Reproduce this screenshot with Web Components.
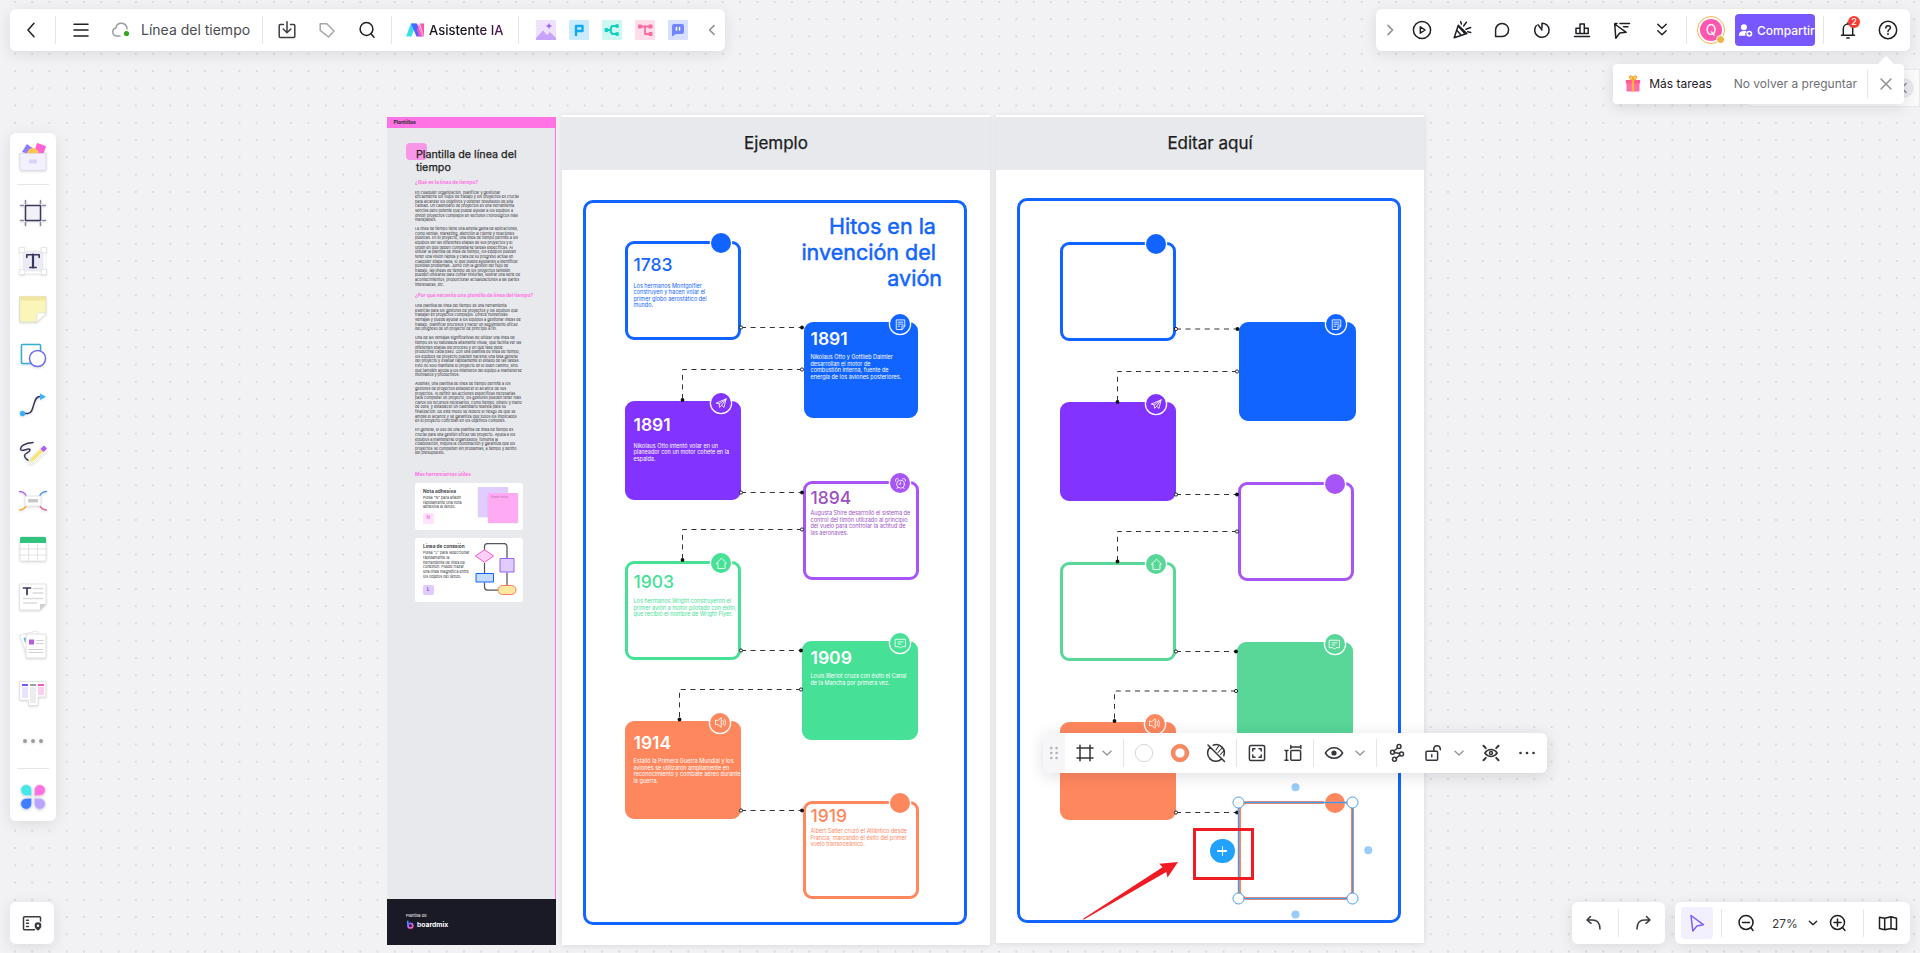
<!DOCTYPE html>
<html lang="es">
<head>
<meta charset="utf-8">
<title>Línea del tiempo</title>
<style>
  html, body { margin: 0; height: 100%; }
  body { font-family: Inter, "Noto Sans", sans-serif; color: #1f2024; overflow: hidden; }
</style>
</head>
<body>
<wb-app></wb-app>

<script>
const icons = {
  back: `<path d="M15 5.2 9 12l6 6.8"/>`,
  left: `<g stroke="#8f9095"><path d="m14 7.6-4.400 4.400 4.400 4.400"/></g>`,
  right: `<g stroke="#8f9095"><path d="m10 7.400 4.600 4.600-4.600 4.600"/></g>`,
  menu: `<path d="M5 6.200h14M5 12h14M5 18h14"/>`,
  cloud: `<g stroke="#9c9da1"><path d="M11 18H7.500a4 4 0 0 1-.6-7.900 5.600 5.600 0 0 1 10.600-1.700c.4.900.5 1.800.5 2.600"/></g><circle cx="17.500" cy="15.500" r="2.600" fill="#3aa51a" stroke="none"/>`,
  download: `<g stroke="#3c3d41"><path d="M8.500 6.500H5.200a1 1 0 0 0-1 1v11a1 1 0 0 0 1 1h13.600a1 1 0 0 0 1-1v-11a1 1 0 0 0-1-1h-3.300M12 3.800v10.700M8.200 11l3.800 3.800 3.800-3.800"/></g>`,
  tag: `<g stroke="#a5a6aa"><path d="M5.200 5.800h6.600L19 13l-5.500 6L5.200 12.400z"/></g>`,
  search: `<circle cx="11.500" cy="11" r="6.400"/><path d="m15.800 15.600 3.200 3.600"/>`,
  play: `<circle cx="12" cy="12" r="8.600"/><path d="M10.300 8.800v6.400l4.800-3.200z"/>`,
  party: `<path d="m8.300 7.300 8.600 8.200-12.700 4.200zM6.800 12.300l4.200 4.600M9 9l5.500 6.200M11.400 6l-.7-2.200M13.600 8l2.800-3.800M16 11.200l4.700-1.700M17.700 13.700l3 .8"/>`,
  chat: `<path d="M5.600 18.400V12A6.500 6.500 0 1 1 12.200 18.400z"/>`,
  timer: `<path d="M16.700 6.800A7.200 7.200 0 1 1 6.300 7.600M12 12 8 6.800M12 5.200v4.500M12 5.200c1.700 0 3.300.5 4.700 1.600"/>`,
  podium: `<path d="M4.500 18.600h15M6 15.500v-5.300h4v5.300M10 15.500V6h4.300v9.500M14.300 10.200h3.900v5.300H6"/>`,
  pointer: `<path d="m4.700 6 11.500 8.300-6.500.7-3.900 5.200zM10 5.500h9.500M13.500 8.800h4.500M5 5.500h2"/>`,
  more2: `<path d="m7.800 6.200 4.200 4 4.200-4M7.800 12.700l4.200 4 4.200-4"/>`,
  bell: `<path d="M5.500 17.200h13M7.300 17v-6.200a4.700 4.700 0 0 1 9.400 0V17M10.800 20h2.400M12 6V4.600"/>`,
  help: `<circle cx="12" cy="12" r="8.700"/><path d="M9.800 9.900c0-3 4.600-2.900 4.600-.2 0 1.800-2.400 1.800-2.400 3.700M12 15.600v1"/>`,
  person: `<g fill="#fff" stroke="none"><circle cx="10" cy="8" r="3.800"/><path d="M3.500 18.500c0-4 2.600-5.800 6.500-5.800 1.300 0 2.400.2 3.300.6a5 5 0 0 0-1.300 5.200z"/><path fill-rule="evenodd" d="M16.800 12.200a3.800 3.800 0 1 0 0 7.600 3.800 3.800 0 0 0 0-7.600zm-.7 1.800h1.400v1.300h1.300v1.400h-1.300V18h-1.400v-1.300h-1.300v-1.400h1.300z"/></g>`,
  close: `<g stroke="#8f9095"><path d="m7 7 10 10M17 7 7 17"/></g>`,
  gift: `<g stroke="none"><path d="M5.500 11h13v8.500h-13z" fill="#ff6cab"/><path d="M4.800 8h14.400v3.500H4.800z" fill="#ff5a93"/><path d="M10.800 8h2.400v11.500h-2.400z" fill="#ffb636"/></g><path d="M12 7.600C8.500 8 7.500 4.200 9.700 4.200S12 7.600 12 7.600s.1-3.400 2.300-3.400S15.500 8 12 7.600z" stroke="#f8a928"/>`,
  undo: `<path d="M8.500 5.500 5 9l4 3.300M5.300 8.900h5c5 0 7.700 3.500 7.700 9.100"/>`,
  redo: `<path d="m15.500 5.500 3.500 3.500-4 3.300M18.700 8.900h-5C8.700 8.900 6 12.400 6 18"/>`,
  arrow: `<g stroke="#7a5cff"><path d="m6 4.500 12.300 9.200-6.500 1.400-4 4.900z"/></g>`,
  minus: `<circle cx="12" cy="11.400" r="7"/><path d="M8.500 11.400h7M16.800 16.500l2.200 3"/>`,
  plus: `<circle cx="11.500" cy="11.400" r="7"/><path d="M8 11.400h7M11.500 8v7M16.500 16.500l2.500 3"/>`,
  map: `<path d="M3.500 6.200 8.700 7.300l6.300-1.500 5.500 1.500v11.200l-5.500-1-6.300 1.300-5.200-1.300zM8.700 7.300v11.500M15 5.800v11.700"/>`,
  navigator: `<g stroke="#3a3b40"><path d="M20.500 10V6.800a1 1 0 0 0-1-1h-15a1 1 0 0 0-1 1v11a1 1 0 0 0 1 1h10M6.500 9.200h2M6.500 12.300h2M6.500 15.400h2"/></g><path fill="#3a3b40" stroke="none" fill-rule="evenodd" d="M18 11.300a3.400 3.400 0 0 0-3.400 3.400c0 2 1.700 3.600 3.400 5 1.700-1.400 3.400-3 3.400-5a3.400 3.400 0 0 0-3.400-3.400zm0 2.300a1.200 1.200 0 1 1 0 2.400 1.200 1.200 0 0 1 0-2.400z"/>`,
  grip: `<g fill="#b0b1b6" stroke="none"><circle cx="9.300" cy="7" r="1.300"/><circle cx="14.600" cy="7" r="1.300"/><circle cx="9.300" cy="12" r="1.300"/><circle cx="14.600" cy="12" r="1.300"/><circle cx="9.300" cy="17" r="1.300"/><circle cx="14.600" cy="17" r="1.300"/></g>`,
  frame: `<path d="M7 4.300v15.400M17 4.300v15.400M4 7h16M4 17h16"/>`,
  down: `<g stroke="#97989d"><path d="m8 10.200 4 3.800 4-3.800"/></g>`,
  downDark: `<path d="m8 10 4 3.800 4-3.800"/>`,
  empty: `<circle cx="12" cy="12" r="8.700" fill="#fff" stroke="#d6d7da" stroke-width="1"/>`,
  ring: `<circle cx="12" cy="12" r="6.800" stroke="#ff875e" stroke-width="4"/><circle cx="12" cy="12" r="8.800" stroke="#d9734f" stroke-width=".6"/><circle cx="12" cy="12" r="4.800" stroke="#c8b4ae" stroke-width=".6"/>`,
  hatch: `<path d="M6 6.300a8.200 8.200 0 0 0 11.600 11.600M9.300 4.200a8.200 8.200 0 0 1 10.500 10.600M4 4l16.500 16.500"/><path stroke-width="1.100" d="m12 9 3-4.500M14 11.500l4.500-5M16.500 13.500l3.500-3.800"/>`,
  fit: `<rect x="4.400" y="4.400" width="15.200" height="15.200" rx="1.500"/><path d="M7.800 10V7.800H10M14 7.800h2.200V10M16.200 14v2.200H14M10 16.200H7.800V14"/>`,
  dims: `<rect x="9.800" y="9.500" width="9.800" height="9.800" rx="1"/><path d="M9.800 6h10M9.800 4.500v3M19.800 4.500v3M5.500 9.500v9.800M4 9.500h3M4 19.300h3"/>`,
  eye: `<path d="M3.400 12c4.200-7 13-7 17.200 0-4.200 7-13 7-17.200 0z"/><circle cx="12" cy="12" r="2.600" fill="currentColor" stroke="none"/>`,
  share: `<circle cx="14" cy="5.600" r="2"/><circle cx="7.500" cy="11.200" r="2"/><circle cx="16.500" cy="13" r="2"/><circle cx="9.500" cy="18.300" r="2"/><path d="m12.600 7-3.700 3M9.500 11.600l5 1M15 14.200l-4 3"/>`,
  lock: `<rect x="5" y="10.200" width="11.600" height="9" rx="1"/><path d="M10.800 13.700v2M12.800 10V7.600a3.300 3.300 0 0 1 6.500 0v1.200"/>`,
  focus: `<path d="M5.800 12c3.300-4.600 9.100-4.600 12.400 0-3.300 4.600-9.100 4.600-12.400 0z"/><path stroke-width="2" d="m4.500 4.800 2.300 2.300M19.500 4.800l-2.300 2.300M4.500 19.200l2.300-2.300M19.500 19.200l-2.300-2.300"/><circle cx="12" cy="12" r="1.500"/>`,
  dots: `<g fill="currentColor" stroke="none"><circle cx="5.500" cy="12" r="1.300"/><circle cx="12" cy="12" r="1.300"/><circle cx="18.500" cy="12" r="1.300"/></g>`,
  note: `<path d="M18 14V5.500H6v13.500h8zM18 14h-4v5M8.500 8.700h7M8.500 11.500h7M8.500 14.500h2.500"/>`,
  plane: `<path d="M5 11.200 18.500 5.500 15.500 17.500 12.200 14.500 9.300 17.500 8.700 12.800zM8.700 12.800 18.500 5.500M18.500 5.500l-6.300 9"/>`,
  clock: `<circle cx="12" cy="13" r="5.500"/><path d="M12 10.300V13h-2M5.200 8.800a2.600 2.600 0 0 1 4.200-3M18.800 8.800a2.600 2.600 0 0 0-4.200-3M8.300 17.500l-1.400 1.800M15.700 17.500l1.400 1.800"/>`,
  home: `<path d="m5 11.500 7-7 7 7h-2V19H7v-7.500z"/>`,
  message: `<path d="M5 6h14v10.500h-5L12 18.700l-2-2.200H5zM8.500 9.700h7M8.500 12.700h4"/>`,
  sound: `<path d="M5 9v6h3.500l4.500 3.800V5.200L8.500 9zM15.500 9c1 2 1 4 0 6M17.500 7c2 3 2 7 0 10"/>`,
  chooser: `<g stroke="none"><path d="m9 4 7 3-4 9H8z" fill="#a27bff" opacity=".9"/><path d="M5 11 10 3l5 4-2 6z" fill="#8f7dff"/><path d="m20 2 9 3-3 9-9-2z" fill="#ff62d5"/><path d="M10 13a6 6 0 0 1 12 0z" fill="#ffc54a"/></g><path d="M3 12.500h26v15.300a1.600 1.600 0 0 1-1.600 1.600H4.600A1.600 1.600 0 0 1 3 27.800z" fill="#f3f0ff" stroke="#dcd9ea" stroke-width=".8"/><rect x="12" y="18.500" width="8" height="4" rx="1" fill="#dad3f8" stroke="none"/>`,
  artboard: `<rect x="8.500" y="8.500" width="15" height="15" fill="#f1f1f6" stroke="#3b3a5a"/><path stroke="#8a8aa8" d="M8.500 3.500v3M23.500 3.500v3M8.500 25.500v3M23.500 25.500v3M3.500 8.500h3M3.500 23.500h3M25.500 8.500h3M25.500 23.500h3"/>`,
  text: `<rect x="4.500" y="4.500" width="23" height="23" fill="#ebebf3" stroke="#fff" stroke-width="2"/><g fill="#fff" stroke="#dfe0e5" stroke-width=".8"><rect x="2.500" y="2.500" width="5" height="5"/><rect x="24.500" y="2.500" width="5" height="5"/><rect x="2.500" y="24.500" width="5" height="5"/><rect x="24.500" y="24.500" width="5" height="5"/></g><path stroke="#38365a" stroke-width="2.200" d="M16 9.500v13"/><path stroke="#38365a" stroke-width="1.600" d="M9.800 12.500V9.800h12.400v2.700M12.800 22.500h6.400"/>`,
  sticky: `<path d="M3 3.500h26V20l-9 9H3z" fill="#faf5b8" stroke="#d9d8cf" stroke-width=".7"/><path d="M3 3.500h26v4H3z" fill="#f1e69f" stroke="none"/><path d="M20 29v-8a1 1 0 0 1 1-1h8z" fill="#fff" stroke="#dddcd6" stroke-width=".6"/>`,
  shapes: `<rect x="4.500" y="3.500" width="19" height="19" rx="1" fill="#fff" stroke="#2fb1d6"/><circle cx="20.500" cy="17.500" r="8" fill="#fff" stroke="#6c6cf5"/>`,
  curve: `<path stroke="#38365a" d="M6 24.500h5c7 0 4-17 12-17h1"/><circle cx="5.500" cy="24.500" r="2.700" fill="#3ab3ff" stroke="none"/><path d="m23 4.500 6 3.200-6 3.200z" fill="#3ab3ff" stroke="none"/>`,
  pen: `<path stroke="#38365a" d="M16 5.500C9 6 2 9 4 13c1 2 9-3 9 0s-6 3-5.500 6c.4 2.500 4 5 5.500 5"/><path d="m13 21 12-12 4 4-12 12-5 1.500z" fill="#f7e77b" stroke="#fff" stroke-width="2"/><path d="m12.300 26 1.200-4.600L25 9l4 4-12 12z" stroke="#d8d6cc" stroke-width=".6"/><path d="m24.500 12 2.500-2.500 2 2-2.500 2.500z" fill="#b45cff" stroke="#b45cff"/>`,
  mind: `<path stroke="#b569e8" d="M2.500 6.500c5 0 6 3 7.500 5.500"/><path stroke="#4a9cf0" d="M29.500 6.500c-5 0-6 3-7.500 5.500"/><path stroke="#f5ab3c" d="M2.500 25c5 0 6-3 7.500-5.500"/><path stroke="#f0668e" d="M29.500 25c-5 0-6-3-7.500-5.500"/><rect x="8" y="11" width="16" height="10" rx="1.500" fill="#fff" stroke="#e3e3e6" stroke-width=".8"/><path d="M11 14h10v3.500H11z" fill="#c9cacd" stroke="none"/>`,
  grid: `<rect x="3" y="4" width="26" height="24" rx="1.500" fill="#fff" stroke="#dcdde0" stroke-width=".8"/><path d="M3 5.500A1.500 1.500 0 0 1 4.500 4h23A1.500 1.500 0 0 1 29 5.500V10H3z" fill="#2fc37c" stroke="none"/><path d="M3 16h26M3 22h26M11.600 10v18M20.400 10v18" stroke="#e2e2e6" stroke-width="1"/>`,
  doc: `<path d="M3 3h26v20l-6 6H3z" fill="#fff" stroke="#dcdde0" stroke-width=".8"/><path d="M23 29v-6h6z" fill="#cfcfd3" stroke="none"/><path d="M6.500 7h7M10 7v6.500" stroke="#38365a" stroke-width="1.700"/><path d="M16 7.500h10M16 12h10M6.500 17.500H26M6.500 22h13" stroke="#dcdce0" stroke-width="1.300"/>`,
  cards: `<path d="m3 6 17-4 5 19-15 5z" fill="#fff" stroke="#e3e4e7" stroke-width=".8"/><path d="m6.500 9 4-1v5.500H8z" fill="#58aef5" stroke="none"/><rect x="9" y="5" width="20" height="24" rx="1" fill="#fff" stroke="#d9dadd" stroke-width=".8"/><path d="M12 10.500h5v5h-5z" fill="#b65be3" stroke="none"/><path d="M19.500 11.500H26M19.500 14.500H26M12 20.500h14M12 23.500h14" stroke="#cfd0d4" stroke-width="1.200"/>`,
  kanban: `<path d="M3 4.500h26V20h-8v8.500h-9.500V23H3z" fill="#fff" stroke="#dcdde0" stroke-width=".8"/><path d="M5 10h6v11H5z" fill="#e9e3ff" stroke="none"/><path d="M13 10h6v16h-6z" fill="#ededf0" stroke="none"/><path d="M21 10h6v8h-6z" fill="#ffcdf1" stroke="none"/><g stroke="none"><path d="M5 7h6v2H5z" fill="#7357ff"/><path d="M13 7h6v2h-6z" fill="#9d9ea3"/><path d="M21 7h6v2h-6z" fill="#ff4fc9"/></g>`,
  ellipsis: `<g fill="#9b9ca1" stroke="none"><circle cx="8" cy="16" r="2"/><circle cx="16" cy="16" r="2"/><circle cx="24" cy="16" r="2"/></g>`,
  clover: `<g stroke="#eceaf2" stroke-width=".8"><path d="M14.800 14.800V9a5.600 5.600 0 1 0-6 5.800z" fill="#45e8e8"/><path d="M17.200 14.800V9a5.600 5.600 0 1 1 6 5.800z" fill="#ff70e0"/><path d="M14.800 17.200V23a5.600 5.600 0 1 1-6-5.800z" fill="#3d7dff"/><path d="M17.200 17.200V23a5.600 5.600 0 1 0 6-5.800z" fill="#b9a4ff"/></g>`,
  ai: `<defs><linearGradient id="a" x1="0" y1="1" x2="0" y2="0"><stop stop-color="#31e6e0"/><stop offset="1" stop-color="#3fd0f3"/></linearGradient><linearGradient id="b"><stop stop-color="#2c7cff"/><stop offset="1" stop-color="#8b3fff"/></linearGradient></defs><g stroke="none"><path d="M3 18.500 8 5.500h5L8.500 18.500z" fill="url(#a)"/><path d="M8 5.500h6l5 13h-5.500z" fill="url(#b)"/><path d="M17 5.500h4v13z" fill="#ff4fb0"/><path d="m16 5.500 5 13h-5l-2-7z" fill="#ff62b8" opacity=".8"/></g>`,
  appImage: `<g stroke="none"><rect x="2" y="2" width="20" height="20" rx="1" fill="#efe2fd"/><path d="m2 20 7-7.500 4 4.500 3-3 6 6v2H2z" fill="#c9a2fb"/><path d="M15 4.500c.5 2.500 1 3 3.500 3.500-2.500.500-3 1-3.500 3.500-.5-2.500-1-3-3.500-3.500 2.500-.5 3-1 3.500-3.500z" fill="#a35cf8"/></g>`,
  appDiagram: `<rect x="2" y="2" width="20" height="20" rx="1" fill="#c8ecfe" stroke="none"/><path d="M9 17V8h6.500v5H9" stroke="#12a9f2" stroke-width="2.400"/>`,
  appMind: `<rect x="2" y="2" width="20" height="20" rx="1" fill="#cdf7f1" stroke="none"/><path d="M17 8h-4c-3 0-3 8 0 8h4M6 12h5" stroke="#11d0c0" stroke-width="2"/><g fill="#11d0c0" stroke="none"><circle cx="17" cy="8" r="2"/><circle cx="17" cy="16" r="2"/><circle cx="6.500" cy="12" r="2.200"/></g>`,
  appFlow: `<rect x="2" y="2" width="20" height="20" rx="1" fill="#ffdcea" stroke="none"/><path d="M7 8.500h10M12 8.500V16h5" stroke="#f86aa1" stroke-width="1.800"/><g fill="#f86aa1" stroke="none"><rect x="5" y="6.500" width="4" height="4" rx="1"/><rect x="15.500" y="6.500" width="4" height="4" rx="1"/><rect x="15.500" y="14" width="4" height="4" rx="1"/></g>`,
  appChat: `<g stroke="none"><rect x="2" y="2" width="20" height="20" rx="1" fill="#d7e0ff"/><path d="M8 6h8a2 2 0 0 1 2 2v6a2 2 0 0 1-2 2h-6l-4 2.500V8a2 2 0 0 1 2-2z" fill="#7286fb"/></g><path d="M10.500 9.500V12M13.500 9.500V12" stroke="#fff"/>`,
  boardmix: `<defs><linearGradient id="g" x1="0" x2="1" y2="1"><stop stop-color="#4d6dff"/><stop offset=".5" stop-color="#d95cff"/><stop offset="1" stop-color="#ff5d9a"/></linearGradient></defs><path d="M5 2v13" stroke="#4e8dff" stroke-width="4.500"/><circle cx="12.500" cy="14.500" r="6.500" stroke="url(#g)" stroke-width="5"/>`
};
const large = new Set(['chooser','artboard','text','sticky','shapes','curve','pen','mind','grid','doc','cards','kanban','ellipsis','clover']);

/* Registers an element whose shadow root is cloned from the given markup. */
function define(name, markup, setup) {
  const template = document.createElement('template');
  customElements.define(name, class extends HTMLElement {
    constructor() {
      super();
      this.attachShadow({ mode: 'open' });
    }
    connectedCallback() {
      if (this.shadowRoot.childNodes.length) return;
      template.innerHTML = markup;
      this.shadowRoot.append(template.content.cloneNode(true));
      if (setup) setup(this, this.shadowRoot);
    }
  });
}

define('wb-icon', `
<style>
  :host { display: block; flex: none; width: 24px; height: 24px; }
  :host([large]) { width: 32px; height: 32px; }
  svg { display: block; width: 100%; height: 100%; fill: none; stroke: currentColor; stroke-width: var(--stroke, 1.5px); stroke-linecap: round; stroke-linejoin: round; overflow: visible; }
</style><svg aria-hidden="true"></svg>`, (host, root) => {
  const name = host.getAttribute('name');
  const svg = root.querySelector('svg');
  const big = large.has(name);
  host.toggleAttribute('large', big);
  svg.setAttribute('viewBox', big ? '0 0 32 32' : '0 0 24 24');
  svg.innerHTML = icons[name] || '';
});

define('icon-button', `
<style>
  :host { display: block; flex: none; width: 32px; height: 32px; }
  button { all: unset; box-sizing: border-box; width: 100%; height: 100%; display: flex; align-items: center; justify-content: center; border-radius: 4px; cursor: pointer; color: inherit; }
  button:hover, :host([active]) button { background: #f2efff; }
</style><button type="button"><wb-icon></wb-icon></button>`, (host, root) => {
  root.querySelector('button').setAttribute('aria-label', host.getAttribute('label'));
  const icon = document.createElement('wb-icon');
  icon.setAttribute('name', host.getAttribute('icon'));
  root.querySelector('wb-icon').replaceWith(icon);
});

define('bar-rule', `<style>:host { display: block; flex: none; width: 1px; height: 28px; background: #e6e6e9; } :host([flat]) { width: 32px; height: 1px; }</style>`);

define('tool-bar', `
<style>
  :host { display: flex; align-items: center; gap: 8px; height: 42px; padding: 0 6px; box-sizing: border-box; background: #fff; border-radius: 6px; box-shadow: 0 3px 14px rgba(25, 25, 50, .1); pointer-events: auto; }
</style><slot></slot>`);

define('file-bar', `
<style>
  :host { display: block; }
  tool-bar { padding: 0 2px 0 5px; }
  button { all: unset; display: flex; align-items: center; cursor: pointer; white-space: nowrap; }
  .name { padding: 0 4px; gap: 8px; font-size: 14px; line-height: 20px; color: #4b4c50; }
  .menu { margin-left: 1px; }
  .ai { padding: 0 7px 0 3px; gap: 2px; font-size: 13px; line-height: 20px; font-weight: 500; color: #1f1024; }
  .ai span { background: linear-gradient(90deg, #17131c 60%, #54175f); background-clip: text; color: transparent; }
  .apps { display: flex; gap: 9px; padding: 0 3px 0 7px; }
  .apps icon-button { width: 24px; height: 24px; }
  .fold { width: 22px; }
</style>
<tool-bar>
  <icon-button icon="back" label="Volver"></icon-button>
  <bar-rule></bar-rule>
  <icon-button class="menu" icon="menu" label="Menú"></icon-button>
  <button class="name" type="button"><wb-icon name="cloud"></wb-icon><span>Línea del tiempo</span></button>
  <bar-rule></bar-rule>
  <icon-button icon="download" label="Exportar"></icon-button>
  <icon-button icon="tag" label="Etiquetas"></icon-button>
  <icon-button icon="search" label="Buscar"></icon-button>
  <bar-rule></bar-rule>
  <button class="ai" type="button"><wb-icon name="ai"></wb-icon><span>Asistente IA</span></button>
  <bar-rule></bar-rule>
  <div class="apps">
    <icon-button icon="appImage" label="Imagen"></icon-button>
    <icon-button icon="appDiagram" label="Presentación"></icon-button>
    <icon-button icon="appMind" label="Mapa mental"></icon-button>
    <icon-button icon="appFlow" label="Diagrama"></icon-button>
    <icon-button icon="appChat" label="Chat"></icon-button>
  </div>
  <icon-button class="fold" icon="left" label="Plegar"></icon-button>
</tool-bar>`);

define('session-bar', `
<style>
  :host { display: block; }
  .fold { width: 16px; }
  .avatar { position: relative; width: 28px; height: 28px; margin: 0 2px; box-sizing: border-box; border: 1px solid #f6b64a; border-radius: 50%; padding: 2px; }
  .avatar b { display: block; border-radius: 50%; background: #ff56ae; color: #fff; font-size: 14px; line-height: 22px; font-weight: 400; text-align: center; }
  .crown { position: absolute; right: -1px; bottom: -1px; width: 9px; height: 9px; border-radius: 50%; background: #f2b24a; border: 1px solid #fff; box-sizing: border-box; }
  .share { all: unset; display: flex; align-items: center; gap: 2px; box-sizing: border-box; width: 80px; height: 32px; padding-left: 1px; border-radius: 4px; background: #7857ff; color: #fff; font-size: 12px; font-weight: 500; cursor: pointer; white-space: nowrap; }
  .share wb-icon { width: 19px; height: 19px; }
  .alert { position: relative; }
  .alert b { position: absolute; right: 4px; top: 2px; width: 12px; height: 12px; border-radius: 6px; background: #fa3a30; color: #fff; font-size: 9px; line-height: 12px; font-weight: 500; text-align: center; }
</style>
<tool-bar>
  <icon-button class="fold" icon="right" label="Desplegar"></icon-button>
  <icon-button icon="play" label="Presentar"></icon-button>
  <icon-button icon="party" label="Celebrar"></icon-button>
  <icon-button icon="chat" label="Comentarios"></icon-button>
  <icon-button icon="timer" label="Temporizador"></icon-button>
  <icon-button icon="podium" label="Votación"></icon-button>
  <icon-button icon="pointer" label="Seguir cursor"></icon-button>
  <icon-button icon="more2" label="Más"></icon-button>
  <bar-rule></bar-rule>
  <div class="avatar"><b>Q</b><span class="crown"></span></div>
  <button class="share" type="button"><wb-icon name="person"></wb-icon><span>Compartir</span></button>
  <bar-rule></bar-rule>
  <div class="alert"><icon-button icon="bell" label="Avisos"></icon-button><b>2</b></div>
  <icon-button icon="help" label="Ayuda"></icon-button>
</tool-bar>`);

define('task-popover', `
<style>
  :host { display: flex; align-items: center; height: 40px; box-sizing: border-box; padding: 0 2px 0 8px; background: #fff; border-radius: 4px; box-shadow: 0 3px 14px rgba(25, 25, 50, .12); font-size: 12px; line-height: 20px; white-space: nowrap; pointer-events: auto; }
  :host::before { content: ""; position: absolute; right: 10px; top: -8px; border: 8px solid transparent; border-top: 0; border-bottom-color: #fff; }
  strong { font-weight: 400; margin: 0 22px 0 4px; }
  a { color: #6e6f74; text-decoration: none; margin-right: 10px; }
  icon-button { margin-left: 2px; }
</style>
<wb-icon name="gift"></wb-icon><strong>Más tareas</strong><a href="#">No volver a preguntar</a><bar-rule></bar-rule>
<icon-button icon="close" label="Cerrar"></icon-button>`);

define('tool-rail', `
<style>
  :host { display: flex; flex-direction: column; align-items: center; width: 46px; background: #fff; border-radius: 6px; box-shadow: 0 3px 14px rgba(25, 25, 50, .1); pointer-events: auto; }
  icon-button { width: 46px; height: 48px; filter: drop-shadow(0 1px 1px #0002); }
  bar-rule { margin: 3px 0 4px; }
</style>
<icon-button icon="chooser" label="Plantillas"></icon-button>
<bar-rule flat></bar-rule>
<icon-button icon="artboard" label="Marco"></icon-button>
<icon-button icon="text" label="Texto"></icon-button>
<icon-button icon="sticky" label="Nota adhesiva"></icon-button>
<icon-button icon="shapes" label="Formas"></icon-button>
<icon-button icon="curve" label="Línea de conexión"></icon-button>
<icon-button icon="pen" label="Lápiz"></icon-button>
<icon-button icon="mind" label="Mapa mental"></icon-button>
<icon-button icon="grid" label="Tabla"></icon-button>
<icon-button icon="doc" label="Documento"></icon-button>
<icon-button icon="cards" label="Tarjetas"></icon-button>
<icon-button icon="kanban" label="Kanban"></icon-button>
<icon-button icon="ellipsis" label="Más herramientas"></icon-button>
<bar-rule flat></bar-rule>
<icon-button icon="clover" label="Aplicaciones"></icon-button>`);

define('view-bar', `
<style>
  :host { display: flex; gap: 10px; }
  .history { color: #3a3b40; }
  .zoom { display: flex; align-items: center; gap: 4px; margin-right: 1px; }
  label { position: relative; display: block; width: 52px; }
  select { all: unset; box-sizing: border-box; width: 100%; padding-left: 6px; font-size: 12px; line-height: 20px; color: #3a3b40; cursor: pointer; }
  label wb-icon { position: absolute; right: -6px; top: 0; width: 22px; height: 22px; pointer-events: none; }
</style>
<tool-bar class="history">
  <icon-button icon="undo" label="Deshacer"></icon-button><bar-rule></bar-rule>
  <icon-button icon="redo" label="Rehacer"></icon-button>
</tool-bar>
<tool-bar>
  <icon-button icon="arrow" label="Seleccionar" active></icon-button><bar-rule></bar-rule>
  <div class="zoom">
    <icon-button icon="minus" label="Alejar"></icon-button>
    <label><select aria-label="Nivel de zoom"><option>27%</option></select><wb-icon name="downDark"></wb-icon></label>
    <icon-button icon="plus" label="Acercar"></icon-button>
  </div>
  <bar-rule></bar-rule>
  <icon-button icon="map" label="Minimapa"></icon-button>
</tool-bar>`);

define('context-bar', `
<style>
  :host { display: flex; height: 40px; background: #fff; border-radius: 6px; box-shadow: 0 3px 16px rgba(25, 25, 50, .14); color: #35363a; }
  .grip { display: flex; align-items: center; justify-content: center; width: 22px; background: #f6f6f9; border-radius: 6px 0 0 6px; }
  .group { position: relative; display: flex; align-items: center; gap: 12px; padding: 0 8px; }
  .group + .group { padding-left: 9px; }
  .group + .group::before { content: ""; position: absolute; left: 0; top: 6px; bottom: 6px; width: 1px; background: #e6e6e9; }
  icon-button { width: 24px; height: 24px; }
  .caret { width: 16px; margin-left: -6px; }
  .near { margin-left: -10px; }
</style>
<div class="grip"><wb-icon name="grip"></wb-icon></div>
<div class="group"><icon-button icon="frame" label="Tipo de marco"></icon-button><icon-button class="caret near" icon="down" label="Opciones de marco"></icon-button></div>
<div class="group"><icon-button icon="empty" label="Relleno"></icon-button><icon-button icon="ring" label="Borde"></icon-button><icon-button icon="hatch" label="Estilo dibujado"></icon-button></div>
<div class="group"><icon-button icon="fit" label="Ajustar"></icon-button><icon-button icon="dims" label="Dimensiones"></icon-button></div>
<div class="group"><icon-button icon="eye" label="Visibilidad"></icon-button><icon-button class="caret" icon="down" label="Opciones de visibilidad"></icon-button></div>
<div class="group"><icon-button icon="share" label="Relaciones"></icon-button><icon-button icon="lock" label="Bloquear"></icon-button><icon-button class="caret" icon="down" label="Opciones de bloqueo"></icon-button><icon-button icon="focus" label="Enfocar"></icon-button><icon-button icon="dots" label="Más opciones"></icon-button></div>`);

/* Frames, cards and links live in world units; the board shows four of them to a screen pixel. */
define('board-frame', `
<style>
  :host { position: absolute; box-sizing: border-box; width: 1712px; height: 3312px; background: #fff; box-shadow: 0 4px 24px rgba(0, 0, 0, .1); }
  h2 { margin: 8px 0 0; height: 212px; background: #e8e9ed; font-size: 68px; line-height: 212px; font-weight: 400; text-align: center; color: #1c1d20; -webkit-text-stroke: 1px; }
  .outline { position: absolute; left: 84px; top: var(--outline-top, 332px); width: 1536px; height: 2899px; box-sizing: border-box; border: 12px solid #1164ff; border-radius: 40px; }
</style><h2><slot name="title"></slot></h2><div class="outline"></div><slot></slot>`);

define('timeline-card', `
<style>
  :host { position: absolute; box-sizing: border-box; width: 467px; height: 395px; border: 12px solid var(--ink); border-radius: 36px; color: var(--text, var(--ink)); background: #fff; font-size: 22px; line-height: 26px; white-space: nowrap; }
  :host([filled]) { background: var(--ink); color: #fff; }
  .body { padding: calc(var(--top, 0px) - 12px) 0 0 calc(var(--side, 36px) - 12px); }
  h3 { margin: 0 0 var(--space, 16px); font-size: 70px; line-height: 88px; font-weight: 500; }
  :host([filled]) h3 { font-weight: 600; }
  p { margin: 0; }
  .badge { position: absolute; left: calc(var(--badge, 386px) - 52px); top: -44px; width: 80px; height: 80px; border-radius: 50%; background: var(--ink); box-shadow: 0 0 0 5px #fff; color: #fff; display: flex; align-items: center; justify-content: center; }
  .badge wb-icon { width: 68px; height: 68px; --stroke: 1.2px; }
</style><span class="badge"></span>`, (host, root) => {
  if (host.hasAttribute('icon')) {
    const icon = document.createElement('wb-icon');
    icon.setAttribute('name', host.getAttribute('icon'));
    root.querySelector('.badge').append(icon);
  }
  if (host.hasAttribute('year')) {
    const body = document.createElement('div');
    body.className = 'body';
    body.innerHTML = '<h3></h3><p><slot></slot></p>';
    body.firstChild.textContent = host.getAttribute('year');
    root.append(body);
  }
});

define('link-layer', `
<style>
  :host { position: absolute; left: 0; top: 0; pointer-events: none; }
  svg { display: block; width: 7680px; height: 3812px; fill: none; stroke: #333; overflow: visible; }
</style><svg viewBox="0 0 1920 953" aria-hidden="true"></svg>`, (host, root) => {
  root.querySelector('svg').innerHTML = host.getAttribute('routes').split(';').map(route => {
    const points = route.trim().split(' ');
    const [sx, sy] = points[0].split(',');
    const [ex, ey] = points.at(-1).split(',');
    return `<polyline points="${route.trim()}" stroke-width="1" stroke-dasharray="5 4.600"/>
      <circle cx="${sx}" cy="${sy}" r="1.600" fill="#fff" stroke="#111" stroke-width=".9"/>
      <circle cx="${ex}" cy="${ey}" r="1.900" fill="#111" stroke="none"/>`;
  }).join('');
});

define('selection-marks', `
<style>
  :host { position: absolute; left: 0; top: 0; }
  svg { display: block; width: 7680px; height: 3812px; overflow: visible; pointer-events: none; }
  button { all: unset; position: absolute; left: 4841px; top: 3354px; width: 97px; height: 97px; border-radius: 50%; background: #22a2ff; color: #fff; display: flex; align-items: center; justify-content: center; cursor: pointer; }
  button::before, button::after { content: ""; position: absolute; width: 40px; height: 7px; border-radius: 3px; background: currentColor; }
  button::after { width: 7px; height: 40px; }
</style>
<button type="button" aria-label="Añadir"></button>
<svg viewBox="0 0 1920 953" aria-hidden="true">
  <rect x="1238.500" y="802.500" width="114" height="96" fill="none" stroke="#3f9af0" stroke-width="1.400"/>
  <g fill="#fff" stroke="#4b9eea"><circle cx="1238.500" cy="802.500" r="5.500"/><circle cx="1352.500" cy="802.500" r="5.500"/><circle cx="1238.500" cy="898.500" r="5.500"/><circle cx="1352.500" cy="898.500" r="5.500"/></g>
  <g fill="#97ccfc"><circle cx="1295.500" cy="787.300" r="4"/><circle cx="1368.300" cy="850.300" r="4"/><circle cx="1295.500" cy="914.500" r="4"/></g>
  <rect x="1194.500" y="829.500" width="58" height="49" fill="none" stroke="#ef1c24" stroke-width="3"/>
  <path d="m1083 918.700 79.500-51.500-3.200-3.500 18.700-1.700-10.500 15.400-1.300-5.300-82.700 47.700z" fill="#ef1c24"/>
</svg>`);

define('guide-panel', `
<style>
  :host { position: absolute; left: 1548px; top: 468px; width: 676px; height: 3312px; box-sizing: border-box; display: flex; flex-direction: column; background: #e8e9ed; border-right: 4px solid #ff73e4; font-size: 15px; line-height: 1.23; color: #2a2b2f; white-space: nowrap; }
  header { height: 44px; padding-left: 26px; background: #ff73e4; font-size: 20px; line-height: 42px; font-weight: 700; }
  main { padding-left: 112px; }
  h1 { position: relative; margin: 78px 0 24px; padding-left: 4px; font-size: 43px; line-height: 52px; font-weight: 400; color: #1c1d20; -webkit-text-stroke: 1px; }
  h1::before { content: ""; position: absolute; left: -36px; top: -18px; width: 84px; height: 66px; border-radius: 16px; background: #ff73e4b0; }
  h1 span { position: relative; }
  h2 { margin: 24px 0; font-size: 19px; line-height: 20px; font-weight: 700; color: #ff73e4; }
  p { margin: 0 0 18px; }
  h2.tools { margin: 66px 0 22px; }
  section { display: flex; justify-content: space-between; width: 432px; height: 188px; box-sizing: border-box; padding: 20px 20px 0 32px; margin-bottom: 32px; background: #fff; border-radius: 10px; }
  section.tall { height: 256px; padding: 22px 26px 0 32px; }
  .copy { display: flex; flex-direction: column; height: 144px; }
  .tall .copy { height: 208px; }
  h3 { margin: 0 0 8px; font-size: 19px; line-height: 24px; font-weight: 600; }
  kbd { width: 42px; margin-top: auto; border-radius: 8px; background: #ffe3fa; color: #ff73e4; font: 700 18px/42px Inter, sans-serif; text-align: center; }
  .tall kbd { background: #e0ccff; color: #8233ff; }
  .notes { position: relative; width: 160px; height: 148px; }
  .notes i { position: absolute; left: 0; top: -2px; width: 120px; height: 120px; background: #e0ccff; box-shadow: 0 3px 6px #0002; }
  .notes i + i { left: 40px; top: 22px; background: #ffaaf2; font: 12px/32px Inter, sans-serif; color: #b86ba8; text-indent: 12px; }
  svg { width: 168px; height: 212px; }
  footer { margin: auto -4px 0 0; height: 184px; box-sizing: border-box; padding: 54px 0 0 76px; background: #191a26; color: #fff; }
  footer small { display: block; font-size: 16px; line-height: 20px; }
  footer div { display: flex; align-items: center; gap: 10px; margin-top: 10px; font-size: 27px; line-height: 36px; font-weight: 700; }
  footer wb-icon { width: 34px; height: 38px; }
</style>
<header>Plantillas</header>
<main>
  <h1><span>Plantilla de línea del<br>tiempo</span></h1>
  <h2>¿Qué es la línea de tiempo?</h2>
  <p>En cualquier organización, planificar y gestionar<br>eficazmente los flujos de trabajo y los proyectos es crucial<br>para alcanzar los objetivos y obtener resultados de alta<br>calidad. Un calendario de proyectos es una herramienta<br>sencilla pero potente que puede ayudar a los equipos a<br>dividir proyectos complejos en sectores cronológicos más<br>manejables.</p>
  <p>La línea de tiempo tiene una amplia gama de aplicaciones,<br>como ventas, marketing, atención al cliente y relaciones<br>públicas. En el proyecto, una línea de tiempo permite a los<br>equipos ver las diferentes etapas de sus proyectos y el<br>orden en que deben completarse tareas específicas. Al<br>utilizar la plantilla de línea de tiempo, los equipos pueden<br>tener una visión rápida y clara de su progreso actual en<br>cualquier etapa dada, lo que puede ayudarles a identificar<br>posibles problemas. Junto con la gestión del flujo de<br>trabajo, las líneas de tiempo de los proyectos también<br>pueden utilizarse para contar historias, ilustrar una serie de<br>acontecimientos, proporcionar actualizaciones a las partes<br>interesadas, etc.</p>
  <h2>¿Por qué necesita una plantilla de línea del tiempo?</h2>
  <p>Una plantilla de línea del tiempo es una herramienta<br>esencial para los gestores de proyectos y los equipos que<br>trabajan en proyectos complejos. Ofrece numerosas<br>ventajas y puede ayudar a los equipos a gestionar líneas de<br>trabajo, planificar procesos y hacer un seguimiento eficaz<br>del progreso de un proyecto de principio a fin.</p>
  <p>Una de las ventajas significativas de utilizar una línea de<br>tiempo es su naturaleza altamente visual, que facilita ver las<br>diferentes etapas del proceso y en qué fase debe<br>producirse cada paso. Con una plantilla de línea de tiempo,<br>los equipos de proyecto pueden hacerse una idea general<br>del proyecto y evaluar rápidamente el estado de las tareas.<br>Esto no solo mantiene el proyecto en el buen camino, sino<br>que también ayuda a los miembros del equipo a mantenerse<br>motivados y productivos.</p>
  <p>Además, una plantilla de línea de tiempo permite a los<br>gestores de proyectos establecer el alcance de sus<br>proyectos. Al definir las acciones específicas necesarias<br>para completar un proyecto, los gestores pueden tener más<br>claros los recursos necesarios, como tiempo, dinero y mano<br>de obra, y establecer un calendario realista para su<br>finalización. De este modo se reduce el riesgo de que se<br>amplíe el alcance y se garantiza que todos los implicados<br>en el proyecto coincidan en los objetivos comunes.</p>
  <p>En general, el uso de una plantilla de línea de tiempo es<br>crucial para una gestión eficaz del proyecto. Ayuda a los<br>equipos a mantenerse organizados, fomenta la<br>colaboración, mejora la coordinación y garantiza que los<br>proyectos se completen sin problemas, a tiempo y dentro<br>del presupuesto.</p>
  <h2 class="tools">Más herramientas útiles</h2>
  <section>
    <div class="copy"><h3>Nota adhesiva</h3><span>Pulsa "N" para añadir<br>rápidamente una nota<br>adhesiva al lienzo.</span><kbd>N</kbd></div>
    <div class="notes"><i></i><i>Añadir texto</i></div>
  </section>
  <section class="tall">
    <div class="copy"><h3>Línea de conexión</h3><span>Pulsa "L" para seleccionar<br>rápidamente la<br>herramienta de línea de<br>conexión. Puede trazar<br>una línea magnética entre<br>los objetos del lienzo.</span><kbd>L</kbd></div>
    <svg viewBox="0 0 168 212" aria-hidden="true"><path d="M38 28V14q0-12 12-12h66q12 0 12 12v50M38 80v40M128 118v52M38 158v18q0 12 12 12h46" fill="none" stroke="#55565c" stroke-width="5"/><path d="m38 27 37 25-37 25L1 52z" fill="#ffd0f6" stroke="#f45ccf" stroke-width="4"/><path d="M100 62h56v54h-56z" fill="#e0ccff" stroke="#9a63ee" stroke-width="4"/><path d="M4 122h70v34H4z" fill="#c6dcff" stroke="#1164ff" stroke-width="4"/><rect x="92" y="170" width="72" height="36" rx="18" fill="#ffe9a0" stroke="#ff7a5c" stroke-width="4"/></svg>
  </section>
</main>
<footer><small>Plantilla de</small><div><wb-icon name="boardmix"></wb-icon>boardmix</div></footer>`);

define('wb-board', `
<style>
  :host { --scale: .27; position: absolute; inset: 0; overflow: hidden; background: conic-gradient(from 270deg at 2px 2px, #dadadd 25%, transparent 0) 14px 1px / calc(64px * var(--scale)) calc(64px * var(--scale)) #f2f2f4; }
  .world { zoom: .25; position: absolute; left: 0; top: 0; }
  .headline { position: absolute; right: 192px; top: 390px; margin: 0; font-size: 86px; line-height: 105px; font-weight: 400; color: #1164ff; text-align: right; white-space: pre; -webkit-text-stroke: 2px; }
  board-frame.example { --outline-top: 340px; left: 2248px; top: 460px; height: 3320px; }
  board-frame.edit { left: 3984px; top: 460px; }
  .blue { --ink: #1164ff; } .violet { --ink: #8233ff; } .lilac { --ink: #a855f7; --text: #9a4fc4; }
  .green { --ink: #46e196; } .mint { --ink: #58d798; } .orange { --ink: #ff875e; }
  context-bar { position: absolute; left: 1043px; top: 733px; }
</style>
<div class="world">
  <guide-panel></guide-panel>
  <board-frame class="example">
    <span slot="title">Ejemplo</span>
    <h2 class="headline">Hitos en la 
invención del 
avión</h2>
    <timeline-card class="blue" year="1783" style="left:250px;top:504px;--top:52px;--space:26px">Los hermanos Montgolfier<br>construyen y hacen volar el<br>primer globo aerostático del<br>mundo.</timeline-card>
    <timeline-card class="blue" filled icon="note" year="1891" style="left:966px;top:828px;width:456px;height:384px;--top:24px;--side:28px;--badge:386px">Nikolaus Otto y Gottlieb Daimler<br>desarrollan el motor de<br>combustión interna, fuente de<br>energía de los aviones posteriores.</timeline-card>
    <timeline-card class="violet" filled icon="plane" year="1891" style="left:250px;top:1144px;--top:52px;--space:26px">Nikolaus Otto intentó volar en un<br>planeador con un motor cohete en la<br>espalda.</timeline-card>
    <timeline-card class="lilac" icon="clock" year="1894" style="left:962px;top:1464px;--top:22px;--side:32px;--space:6px;--badge:390px">Augusta Shire desarrolló el sistema de<br>control del timón utilizado al principio<br>del vuelo para controlar la actitud de<br>las aeronaves.</timeline-card>
    <timeline-card class="green" icon="home" year="1903" style="left:250px;top:1784px;--top:38px;--space:22px">Los hermanos Wright construyeron el<br>primer avión a motor pilotado con éxito,<br>que recibió el nombre de Wright Flyer.</timeline-card>
    <timeline-card class="green" filled icon="message" year="1909" style="left:958px;top:2104px;--top:24px;--badge:394px">Louis Bleriot cruza con éxito el Canal<br>de la Mancha por primera vez.</timeline-card>
    <timeline-card class="orange" filled icon="sound" year="1914" style="left:250px;top:2422px;--top:46px;--badge:382px">Estalló la Primera Guerra Mundial y los<br>aviones se utilizaron ampliamente en<br>reconocimiento y combate aéreo durante<br>la guerra.</timeline-card>
    <timeline-card class="orange" year="1919" style="left:962px;top:2742px;--top:16px;--side:32px;--space:6px;--badge:390px">Albert Satler cruzó el Atlántico desde<br>Francia, marcando el éxito del primer<br>vuelo transoceánico.</timeline-card>
  </board-frame>
  <board-frame class="edit">
    <span slot="title">Editar aquí</span>
    <timeline-card class="blue" style="left:254px;top:509px"></timeline-card>
    <timeline-card class="blue" filled icon="note" style="left:972px;top:828px;--badge:388px"></timeline-card>
    <timeline-card class="violet" filled icon="plane" style="left:254px;top:1148px"></timeline-card>
    <timeline-card class="lilac" style="left:966px;top:1468px;--badge:388px"></timeline-card>
    <timeline-card class="mint" icon="home" style="left:254px;top:1788px"></timeline-card>
    <timeline-card class="mint" filled icon="message" style="left:962px;top:2108px;--badge:392px"></timeline-card>
    <timeline-card class="orange" filled icon="sound" style="left:254px;top:2426px;--badge:380px"></timeline-card>
    <timeline-card class="orange" style="left:966px;top:2744px;--badge:388px"></timeline-card>
  </board-frame>
  <link-layer routes="741,327.5 802,327.5;802,369.5 682.5,369.5 682.5,400;741,492.5 802,492.5;802,529.5 682.5,529.5 682.5,560;741,650.5 801,650.5;801,689.5 679.5,689.5 679.5,719.5;741,810.5 802,810.5;1176,329 1237.5,329;1237,371.5 1117.5,371.5 1117.5,402;1176,494.5 1237,494.5;1237,531.5 1117.5,531.5 1117.5,561.5;1176,651.5 1236,651.5;1236,691 1114.5,691 1114.5,721;1176,812.5 1237,812.5"></link-layer>
  <selection-marks></selection-marks>
</div>
<context-bar></context-bar>`);

define('wb-app', `
<style>
  :host { display: block; position: relative; height: 100vh; overflow: hidden; }
  .shell { position: relative; box-sizing: border-box; height: 100%; padding: 9px 10px; display: flex; flex-direction: column; justify-content: space-between; pointer-events: none; }
  .row { display: flex; justify-content: space-between; align-items: flex-start; }
  .end { position: relative; }
  task-popover { position: absolute; right: 6px; top: 55px; }
  .drawer { position: absolute; right: -10px; top: 60px; width: 182px; height: 38px; box-sizing: border-box; padding-right: 5px; border-radius: 16px 0 0 16px; background: #fafafb; border: 1px solid #e9e9ec; display: flex; align-items: center; justify-content: flex-end; }
  .drawer icon-button { width: 20px; height: 20px; border-radius: 50%; background: #e9e9ed; pointer-events: auto; }
  tool-rail { align-self: flex-start; }
</style>
<wb-board></wb-board>
<div class="shell">
  <div class="row"><file-bar></file-bar><div class="end"><session-bar></session-bar><div class="drawer"><icon-button icon="left" label="Abrir panel"></icon-button></div><task-popover></task-popover></div></div>
  <tool-rail></tool-rail>
  <div class="row"><tool-bar><icon-button icon="navigator" label="Navegador"></icon-button></tool-bar><view-bar></view-bar></div>
</div>`);
</script>
</body>
</html>
